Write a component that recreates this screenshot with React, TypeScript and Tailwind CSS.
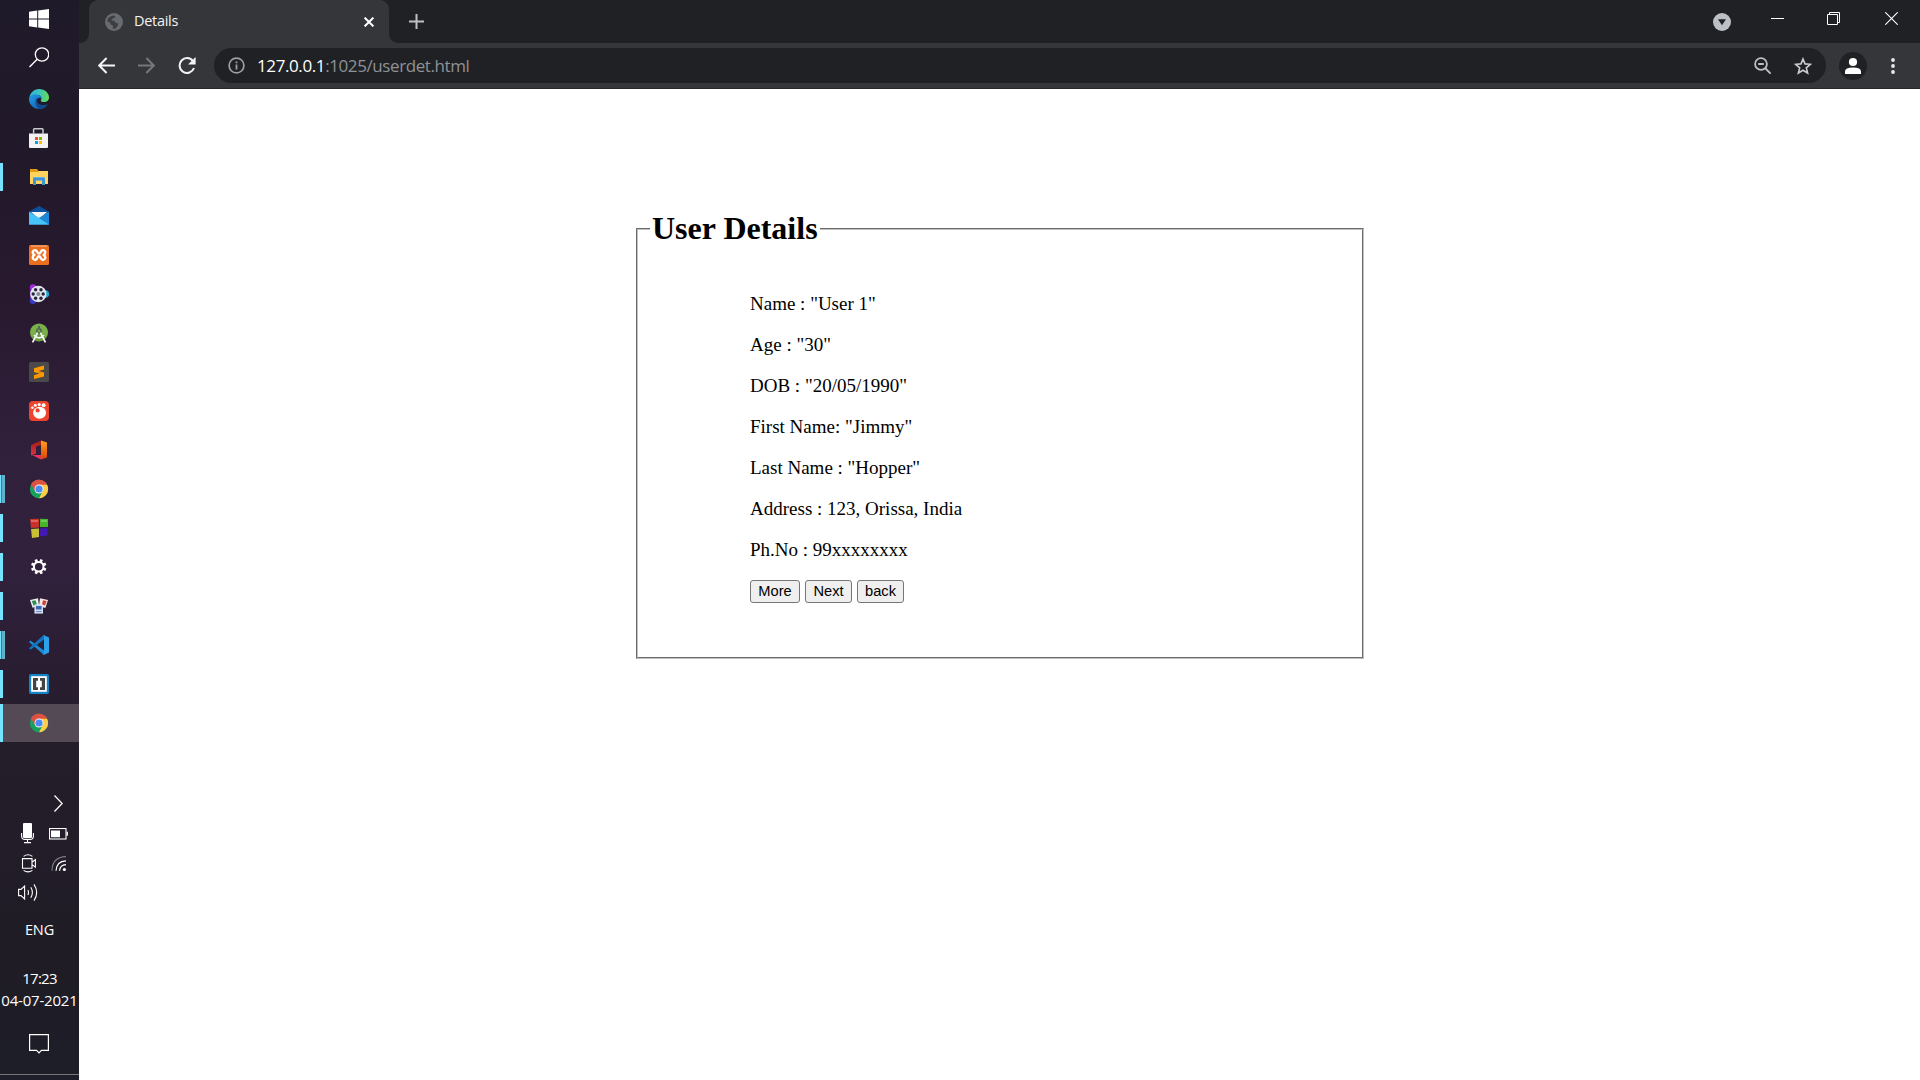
import React from "react";

type P = { children: React.ReactNode; w?: number; h?: number };
const Svg = ({ children, w = 20, h = 20 }: P) => (
  <svg width={w} height={h} viewBox={`0 0 ${w} ${h}`} fill="none" className="block shrink-0">
    {children}
  </svg>
);

const Chrome = () => (
  <Svg>
    <circle cx="10" cy="10" r="9.2" fill="#17a05e" />
    <path d="M10 10 L2.03 5.4 A9.2 9.2 0 0 1 17.97 5.4 Z" fill="#dd5144" />
    <path d="M2.03 5.4 L6.2 12.2 L10 5.4 Z" fill="#dd5144" />
    <path d="M10 5.6 H17.97 A9.2 9.2 0 0 1 10 19.2 L13.8 12.2 Z" fill="#ffcd46" />
    <path d="M10 5.6 H17.97 A9.2 9.2 0 0 0 5 2.3 Z" fill="#dd5144" />
    <circle cx="10" cy="10" r="4.5" fill="#f1f1f1" />
    <circle cx="10" cy="10" r="3.6" fill="#4c8bf5" />
  </Svg>
);

const Edge = () => (
  <Svg>
    <defs>
      <linearGradient id="edgeTop" x1="0" y1="6" x2="20" y2="8" gradientUnits="userSpaceOnUse">
        <stop stopColor="#2fb1dc" />
        <stop offset=".55" stopColor="#3cc8b4" />
        <stop offset="1" stopColor="#68dc4c" />
      </linearGradient>
      <linearGradient id="edgeLow" x1="2" y1="8" x2="12" y2="20" gradientUnits="userSpaceOnUse">
        <stop stopColor="#2192dc" />
        <stop offset="1" stopColor="#1460b4" />
      </linearGradient>
    </defs>
    <path d="M0.3 9 C0.8 4 5 0 10 0 C16 0 20 4.2 20 8.4 C20 11.6 17.6 13 15 13 C12.4 13 11.4 12 11.9 11.2 C13.4 9 12 6 8 6 C4.5 6 1.4 7 .3 9 Z" fill="url(#edgeTop)" />
    <path d="M0 10 C.6 6.6 4 5 7.6 5.4 C11 5.8 12.8 8 12.4 10 C11 7.8 8 8.4 7.8 11.6 C7.6 15.4 11.6 17.6 18.4 15.4 C16.6 18.4 13.6 20 10 20 C4.4 20 0 15.6 0 10 Z" fill="url(#edgeLow)" />
    <path d="M7.9 8.9 C5.4 11.4 6.2 17 10.6 20 C14 19.8 16.8 18.2 18.4 15.4 C12 17.6 7.2 15.2 7.9 8.9Z" fill="#114a8b" />
  </Svg>
);

const Search = () => (
  <Svg h={21}>
    <circle cx="13" cy="7.5" r="6.7" stroke="#fff" strokeWidth="1.3" />
    <path d="M8.2 12.3 L.5 20" stroke="#fff" strokeWidth="1.4" />
  </Svg>
);

const apps: { id: string; open?: 1 | 2; active?: boolean; icon: React.ReactNode }[] = [
  { id: "edge", icon: <Edge /> },
  {
    id: "store",
    icon: (
      <Svg>
        <path d="M4.6 5.5 V1.6 Q4.6 .8 5.4 .8 H13.2 Q14 .8 14 1.6 V5.5" stroke="#c9c9c9" strokeWidth="1.5" />
        <path d="M0 5.5 H19 V19 Q19 20 18 20 H1 Q0 20 0 19 Z" fill="#f2f2f2" />
        <path d="M6 9h3v3H6z" fill="#f25022" />
        <path d="M10 9h3v3h-3z" fill="#7fba00" />
        <path d="M6 13h3v3H6z" fill="#00a4ef" />
        <path d="M10 13h3v3h-3z" fill="#ffb900" />
      </Svg>
    ),
  },
  {
    id: "explorer",
    open: 1,
    icon: (
      <Svg>
        <path d="M1 2h7l1.5 2H19v4H1z" fill="#e09c12" />
        <path d="M1 5h7.6L10 4h9v13H1z" fill="#ffd35c" />
        <path d="M4 18v-6.5Q4 10 5.5 10h9Q16 10 16 11.5V18h-3v-4.5H7V18z" fill="#3d92dc" />
        <path d="M5 10h10v1H5z" fill="#62b0ea" />
      </Svg>
    ),
  },
  {
    id: "mail",
    icon: (
      <Svg>
        <path d="M0 5.6 L10 0 L20 5.6 L10 12 Z" fill="#0d4f9c" />
        <path d="M2 6h16L10 13z" fill="#f7f7f7" />
        <path d="M0 5.8 L10 12 L20 5.8 V18.6 H0z" fill="#37b5f1" />
        <path d="M0 5.8 L20 18.6 H0z" fill="#48c5f8" />
        <path d="M20 5.8 L10 12 L20 18.6z" fill="#1f86d6" />
      </Svg>
    ),
  },
  {
    id: "xampp",
    icon: (
      <Svg>
        <rect width="20" height="20" rx="1.5" fill="#ec6f1f" />
        <path d="M2 1h16" stroke="#f7b78d" strokeWidth="1" />
        <path
          d="M6.4 5.2 C3.4 4.8 2.8 8.4 5.4 9.9 C2.8 11.6 3.4 15.2 6.4 14.8 C8.6 14.4 8 11.3 10 11.3 C12 11.3 11.4 14.4 13.6 14.8 C16.6 15.2 17.2 11.6 14.6 9.9 C17.2 8.4 16.6 4.8 13.6 5.2 C11.4 5.6 12 8.6 10 8.6 C8 8.6 8.6 5.6 6.4 5.2Z"
          stroke="#fff"
          strokeWidth="2.4"
          strokeLinejoin="round"
        />
      </Svg>
    ),
  },
  {
    id: "video",
    icon: (
      <Svg>
        <circle cx="4" cy="3.4" r="3.2" fill="#a02be0" />
        <circle cx="4" cy="16.8" r="3.2" fill="#3a3bc8" />
        <circle cx="16.5" cy="10" r="3.7" fill="#1fa6d8" />
        <path d="M.9 4 Q4 10 .9 16 Z" fill="#6b20b8" />
        <circle cx="9.3" cy="10" r="8.2" fill="#e3e6ee" />
        <g fill="#25253c">
          <circle cx="6.6" cy="5.8" r="1.7" />
          <circle cx="12" cy="5.8" r="1.7" />
          <circle cx="14.2" cy="10" r="1.7" />
          <circle cx="12" cy="14.3" r="1.7" />
          <circle cx="6.6" cy="14.3" r="1.7" />
          <circle cx="4.2" cy="10" r="1.7" />
        </g>
        <circle cx="9.3" cy="10" r="2" fill="#83889b" />
      </Svg>
    ),
  },
  {
    id: "android-studio",
    icon: (
      <Svg>
        <circle cx="10" cy="9.4" r="9" fill="#79b04a" />
        <path d="M3 14 A8 8 0 0 0 17 14 L10 8Z" fill="#6a9e3e" />
        <circle cx="10" cy="8" r="2.2" stroke="#566b52" strokeWidth="1.7" />
        <path d="M10 3v3" stroke="#566b52" strokeWidth="2" />
        <path d="M8.6 9.6 L3.6 19.4 M11.4 9.6 L16.4 19.4" stroke="#f4f4f4" strokeWidth="1.8" />
        <path d="M5 12.2 Q10 17.5 15 12.2" stroke="#f4f4f4" strokeWidth="1.6" />
      </Svg>
    ),
  },
  {
    id: "sublime",
    icon: (
      <Svg>
        <rect width="20" height="20" rx="1.5" fill="#4a4a4a" />
        <path d="M15 3.6 V7.4 L9.6 9 L15 10.6 V14.6 L5 17 V13.2 L10.4 11.6 L5 10 V6.2 Z" fill="#ff9800" />
        <path d="M5 9.8 L15 10.8 L10.4 11.6Z" fill="#e58900" />
      </Svg>
    ),
  },
  {
    id: "gom",
    icon: (
      <Svg>
        <rect width="20" height="20" rx="4" fill="#ee442c" />
        <ellipse cx="10.6" cy="11.8" rx="6.5" ry="6" fill="#fff" />
        <circle cx="8.6" cy="9.4" r="2.1" fill="#ee442c" />
        <circle cx="3.4" cy="6.7" r="1.3" fill="#fff" />
        <circle cx="6.3" cy="4.3" r="1.5" fill="#fff" />
        <circle cx="10.2" cy="3.5" r="1.6" fill="#fff" />
        <circle cx="14.6" cy="4.2" r="2" fill="#fff" />
      </Svg>
    ),
  },
  {
    id: "office",
    icon: (
      <Svg>
        <defs>
          <linearGradient id="off" x1="0" y1="0" x2="0" y2="1">
            <stop stopColor="#ffa21a" />
            <stop offset="1" stopColor="#d8420e" />
          </linearGradient>
          <linearGradient id="offL" x1="0" y1="0" x2="0" y2="1">
            <stop stopColor="#a51e12" />
            <stop offset="1" stopColor="#d9344a" />
          </linearGradient>
        </defs>
        <path d="M2 5 L12 .6 V5 L7 6.6 V13.4 L2 15.4Z" fill="url(#offL)" />
        <path d="M12 .6 L18 2.4 V17.6 L12 19.4Z" fill="url(#off)" />
        <path d="M3 15 H12 V19.4Z" fill="#e6355a" />
      </Svg>
    ),
  },
  { id: "chrome", open: 2, icon: <Chrome /> },
  {
    id: "blocks",
    open: 1,
    icon: (
      <Svg>
        <path d="M1 1 L10 .8 V9.6 L2 10Z" fill="#c9302b" />
        <path d="M11 .8 L19 1 V9 H11Z" fill="#45b52b" />
        <path d="M2 11 L10 10.6 V19 L3 20Z" fill="#c8c032" />
        <path d="M11 10.4 L18.5 10 V17.4 L11 18.4Z" fill="#4118b4" />
        <path d="M2 2h7v2H2z" fill="#ee7a70" opacity=".7" />
        <path d="M12 2h6v2h-6z" fill="#8be070" opacity=".6" />
      </Svg>
    ),
  },
  {
    id: "settings",
    open: 1,
    icon: (
      <Svg>
        <circle cx="9.7" cy="9.7" r="4.8" stroke="#fff" strokeWidth="2" />
        <g stroke="#fff" strokeWidth="2.7">
          {[22.5, 67.5, 112.5, 157.5, 202.5, 247.5, 292.5, 337.5].map((a) => (
            <path key={a} d="M9.7 2 V5" transform={`rotate(${a} 9.7 9.7)`} />
          ))}
        </g>
      </Svg>
    ),
  },
  {
    id: "cards",
    open: 1,
    icon: (
      <Svg>
        <path d="M1 4 L9 2.2 L10 9.6 L3.6 11.8Z" fill="#e8f2ea" />
        <path d="M2.8 5 L6.5 4.2 L8 8.8 L4.6 9.8Z" fill="#2c8a4e" />
        <path d="M11 2.2 L19 4 L16.4 12 L10 10Z" fill="#f6e6e4" />
        <path d="M14 4.2 L17.6 5 L16 9.4 L13 8.6Z" fill="#cc4338" />
        <path d="M5.4 8.4 H14 V17.6 H5.4Z" fill="#d3def4" />
        <path d="M7 10 H12.6 V13.5 H7Z" fill="#3f66b3" />
        <path d="M7 15.6 H12.6" stroke="#6787c4" />
      </Svg>
    ),
  },
  {
    id: "vscode",
    open: 2,
    icon: (
      <Svg>
        <path d="M1.4 5.4 L15 15.6 V20 L0 7 Z" fill="#2089d5" />
        <path d="M0 13.2 L14.6 0 L15 4.6 L1.6 14.8 Z" fill="#1173bd" />
        <path d="M14.4 0 L20 2.4 V17.6 L14.4 20 L14 19 Q15 18.6 15 17.4 V2.6 Q15 1 14 .8 Z" fill="#2da0ec" />
      </Svg>
    ),
  },
  {
    id: "brackets",
    open: 1,
    icon: (
      <Svg>
        <rect width="20" height="20" rx="2" fill="#1683c6" />
        <rect x="2.2" y="2.2" width="15.6" height="15.6" fill="#fff" />
        <path d="M4 4h5v2.8H7.2v6.4H9V16H4z" fill="#444" />
        <path d="M16 4h-5v2.8h1.8v6.4H11V16h5z" fill="#444" />
      </Svg>
    ),
  },
  { id: "chrome-active", open: 1, active: true, icon: <Chrome /> },
];

const Taskbar = () => (
  <aside className="flex h-[1080px] w-[79px] shrink-0 flex-col bg-[linear-gradient(180deg,#1f1a29_0%,#21192a_14%,#29192f_28%,#30203b_42%,#31213d_52%,#2b1e34_60%,#241d2a_68%,#221d29_78%,#1f1c25_90%,#1d1e29_100%)]">
    <div className="flex h-[38px] items-center pl-[29px]">
      <Svg>
        <path d="M0 2.8 L8.2 1.6 V9.4 H0z M9.2 1.4 L20 0 V9.4 H9.2z M0 10.4 H8.2 V18.4 L0 17.2z M9.2 10.4 H20 V20 L9.2 18.6z" fill="#fff" />
      </Svg>
    </div>
    <div className="flex h-[41px] items-center pb-[3px] pl-[29px]">
      <Search />
    </div>
    {apps.map((a) => (
      <div key={a.id} className="flex h-[39px] items-center">
        <div className={a.active ? "flex h-[38px] w-full items-center bg-[#534a56]" : "flex w-full items-center"}>
          <div className={a.active ? "flex h-[38px] w-[29px]" : "flex h-[28px] w-[29px]"}>
            {a.open === 1 && <span className="w-[3px] bg-[#76e3ff]" />}
            {a.open === 2 && (
              <>
                <span className="w-px bg-[#76e3ff]" />
                <span className="w-px bg-[#417e93]" />
                <span className="w-[3px] bg-[#5eb2cb]" />
              </>
            )}
          </div>
          {a.icon}
        </div>
      </div>
    ))}
    <div className="mt-[53px] ml-[54px] h-[18px]">
      <Svg w={9} h={17}>
        <path d="M.5 .5 L8.2 8.5 L.5 16.5" stroke="#fff" strokeWidth="1.3" />
      </Svg>
    </div>
    <div className="mt-[10px] ml-[21px] flex h-[22px] gap-[15px]">
      <Svg w={13} h={21}>
        <rect x="2" y="0" width="9" height="15" rx="1" fill="#fff" />
        <path d="M.6 10 V13 Q.6 16.4 4 16.4 H9 Q12.4 16.4 12.4 13 V10 M6.5 16.4 V19.5 M3 19.6 H10" stroke="#fff" strokeWidth="1.1" />
      </Svg>
      <div className="pt-[5px]">
        <Svg w={19} h={12}>
          <rect x=".5" y=".5" width="16.5" height="10.5" stroke="#fff" strokeWidth="1.1" />
          <path d="M2 2.4h9v6.8H2z M17.5 3.8h1.4v4h-1.4z" fill="#fff" />
        </Svg>
      </div>
    </div>
    <div className="mt-[9px] ml-[21px] flex h-[20px] gap-[14px]">
      <Svg w={16} h={19}>
        <path d="M1.5 4.6h9.5v9.6H1.5z M11 8.2 L14.4 5.6 V13.2 L11 10.6 M2.6 2.4 Q7 -.8 11.4 2.4 M2.6 16.4 Q7 19.4 11.4 16.4" stroke="#fff" strokeWidth="1.1" />
      </Svg>
      <Svg w={16} h={19}>
        <circle cx="13.4" cy="15.5" r="1.6" fill="#fff" />
        <path d="M8.6 16.8 Q8.8 11 15 10.6 M5 16.8 Q5.4 7.2 15 6.8" stroke="#fff" strokeWidth="1.2" />
        <path d="M1 16.8 Q1 3.2 15 2.6" stroke="#7d7884" strokeWidth="1.1" />
      </Svg>
    </div>
    <div className="mt-[9px] ml-[18px] h-[20px]">
      <Svg w={21} h={19}>
        <path d="M.6 6.4 H3 L6.6 3 V16 L3 12.6 H.6z" stroke="#fff" strokeWidth="1.1" />
        <path d="M9.8 7 Q11.2 9.5 9.8 12 M12.8 4.2 Q16 9.5 12.8 14.8 M16 1.4 Q21.4 9.5 16 17.6" stroke="#fff" strokeWidth="1.1" />
      </Svg>
    </div>
    <div className="mt-[17px] text-center font-['Open_Sans',sans-serif] text-[14.5px] leading-[20px] tracking-[-0.1px] text-white">ENG</div>
    <div className="mt-[27px] text-center font-['Open_Sans',sans-serif] text-[15px] leading-[22px] whitespace-nowrap text-white">
      <div className="tracking-[-0.7px]">17:23</div>
      <div className="tracking-[-0.2px]">04-07-2021</div>
    </div>
    <div className="mt-[23px] ml-[29px]">
      <Svg w={20} h={20}>
        <path d="M.6 .6 H19.4 V16.4 H12.4 L10 18.8 L7.6 16.4 H.6z" stroke="#fff" strokeWidth="1.2" />
      </Svg>
    </div>
    <div className="mt-auto mb-[5px] h-px bg-[#77767b]" />
  </aside>
);

const TabStrip = () => (
  <div className="flex h-[43px] items-start bg-[#202124]">
    <div className="flex h-[43px] w-[10px] items-end bg-[#35363a]">
      <div className="h-[43px] w-[10px] rounded-br-[9px] bg-[#202124]" />
    </div>
    <div className="flex w-[300px] bg-[#202124]">
      <div className="flex h-[43px] w-[300px] items-center rounded-t-[9px] bg-[#35363a] pr-[15px] pl-[16px]">
        <Svg w={18} h={18}>
          <circle cx="9" cy="9" r="9" fill="#686b70" />
          <path d="M3 5.6 Q5 3 8.4 2.4 L10.4 3.2 L9 5.2 L7.4 5.6 L6.4 7.6 L9.6 8 L11 10 L13.4 10.6 L12.6 13 L10.6 15.6 Q8 15.8 7.6 15.6 L8.2 13 L5.8 11.4 L5 9.4 L2.4 8.6z" fill="#3c3e42" />
        </Svg>
        <span className="ml-[11px] flex-1 pb-[2px] font-['Open_Sans',sans-serif] text-[14.5px] tracking-[-0.3px] text-[#f1f3f4]">Details</span>
        <Svg w={10} h={10}>
          <path d="M.6 .6 L9.4 9.4 M9.4 .6 L.6 9.4" stroke="#fff" strokeWidth="2" />
        </Svg>
      </div>
    </div>
    <div className="flex h-[43px] flex-1 items-center bg-[#35363a]">
      <div className="flex h-[43px] flex-1 items-center rounded-bl-[9px] bg-[#202124] pl-[20px]">
        <Svg w={15} h={15}>
          <path d="M7.5 0 V15 M0 7.5 H15" stroke="#bdc1c6" strokeWidth="2" />
        </Svg>
        <div className="ml-auto flex h-[43px] items-start pr-[22px]">
          <div className="pt-[13px]">
            <Svg w={18} h={18}>
              <circle cx="9" cy="9" r="9" fill="#bdc1c6" />
              <path d="M5 6.2 H13 L9 12.2z" fill="#202124" />
            </Svg>
          </div>
          <div className="mt-[18px] ml-[40px] h-px w-[13px] bg-white" />
          <div className="mt-[12px] ml-[43px]">
            <Svg w={13} h={13}>
              <path d="M.5 2.5 H10.5 V12.5 H.5z M2.5 2.5 V.5 H12.5 V10.5 H10.5" stroke="#fff" />
            </Svg>
          </div>
          <div className="mt-[12px] ml-[45px]">
            <Svg w={13} h={13}>
              <path d="M.3 .3 L12.7 12.7 M12.7 .3 L.3 12.7" stroke="#fff" strokeWidth="1.1" />
            </Svg>
          </div>
        </div>
      </div>
    </div>
  </div>
);

const Toolbar = () => (
  <div className="flex h-[46px] items-center border-b border-[#28292c] bg-[#35363a] pr-[21px] pl-[19px]">
    <Svg w={17} h={17}>
      <path d="M17 8.5 H1.6 M8.6 1 L1.2 8.5 L8.6 16" stroke="#f1f3f4" strokeWidth="2" />
    </Svg>
    <div className="ml-[23px]">
      <Svg w={17} h={17}>
        <path d="M0 8.5 H15.4 M8.4 1 L15.8 8.5 L8.4 16" stroke="#76777b" strokeWidth="2" />
      </Svg>
    </div>
    <div className="ml-[23px]">
      <Svg w={18} h={18}>
        <path d="M15 4.1 A7.4 7.4 0 1 0 16 11" stroke="#f1f3f4" strokeWidth="2" />
        <path d="M17.6 0 V7.6 H10z" fill="#f1f3f4" />
      </Svg>
    </div>
    <div className="ml-[18px] flex h-[35px] w-[1612px] items-center rounded-full bg-[#202124] pr-[14px] pl-[14px]">
      <Svg w={17} h={17}>
        <circle cx="8.5" cy="8.5" r="7.4" stroke="#9aa0a6" strokeWidth="1.7" />
        <path d="M8.5 7.6 V12.6 M8.5 4.6 V6.3" stroke="#9aa0a6" strokeWidth="1.8" />
      </Svg>
      <div className="ml-[12px] flex-1 font-['Open_Sans',sans-serif] text-[17px] leading-[24px] tracking-[-0.4px] text-[#8f9296]">
        <span className="text-white">127.0.0.1</span>:1025/userdet.html
      </div>
      <Svg w={18} h={18}>
        <circle cx="7" cy="7" r="5.9" stroke="#bdbfc1" strokeWidth="1.8" />
        <path d="M4.2 7 H9.8 M11 11 L16.6 16.6" stroke="#bdbfc1" strokeWidth="1.9" />
      </Svg>
      <div className="ml-[22px]">
        <Svg w={18} h={18}>
          <path d="M9 2 L11 6.9 L16.3 7.3 L12.3 10.8 L13.6 16 L9 13.2 L4.4 16 L5.7 10.8 L1.7 7.3 L7 6.9z" stroke="#c9cbcd" strokeWidth="1.6" />
        </Svg>
      </div>
    </div>
    <div className="ml-[13px]">
      <Svg w={28} h={28}>
        <circle cx="14" cy="14" r="14" fill="#202124" />
        <circle cx="14" cy="10" r="4.1" fill="#fff" />
        <path d="M6 22 V19.4 Q6 15.5 14 15.5 Q22 15.5 22 19.4 V22z" fill="#fff" />
      </Svg>
    </div>
    <div className="ml-auto">
      <Svg w={18} h={18}>
        <circle cx="12" cy="3" r="1.9" fill="#e8eaed" />
        <circle cx="12" cy="9" r="1.9" fill="#e8eaed" />
        <circle cx="12" cy="15" r="1.9" fill="#e8eaed" />
      </Svg>
    </div>
  </div>
);

const rows = [
  'Name : "User 1"',
  'Age : "30"',
  'DOB : "20/05/1990"',
  'First Name: "Jimmy"',
  'Last Name : "Hopper"',
  "Address : 123, Orissa, India",
  "Ph.No : 99xxxxxxxx",
];

export default function App() {
  return (
    <div className="flex h-[1080px] w-[1920px] overflow-hidden bg-white">
      <Taskbar />
      <div className="flex flex-1 flex-col">
        <TabStrip />
        <Toolbar />
        <main className="font-['Liberation_Serif',serif] text-[19px] text-black">
          <fieldset className="mt-[121px] ml-[557px] h-[449px] w-[728px] border-2 border-[#c0c0c0] px-[12px] [border-style:groove]">
            <legend className="px-[2px] text-[32px] leading-[37px] font-bold">User Details</legend>
            <div className="mt-[46px] ml-[100px] flex flex-col gap-[19px]">
              {rows.map((r) => (
                <p key={r} className="leading-[22px]">{r}</p>
              ))}
              <div className="flex gap-[5px] font-['Liberation_Sans',sans-serif] text-[14.67px] leading-[21px]">
                <button className="h-[23px] w-[50px] rounded-[3px] border border-[#767676] bg-[#efefef]">More</button>
                <button className="h-[23px] w-[47px] rounded-[3px] border border-[#767676] bg-[#efefef]">Next</button>
                <button className="h-[23px] w-[47px] rounded-[3px] border border-[#767676] bg-[#efefef]">back</button>
              </div>
            </div>
          </fieldset>
        </main>
      </div>
    </div>
  );
}
